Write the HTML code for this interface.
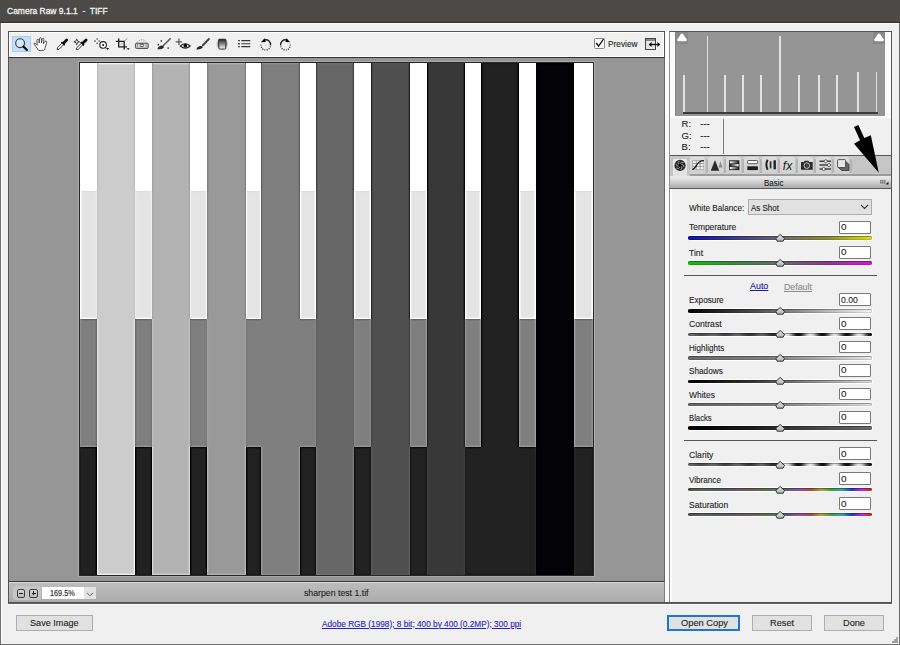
<!DOCTYPE html>
<html><head><meta charset="utf-8"><style>
*{margin:0;padding:0;box-sizing:border-box}
html,body{width:900px;height:645px;overflow:hidden;background:#f0f0f0;font-family:"Liberation Sans",sans-serif;color:#1e1e1e}
.a{position:absolute}
.t{position:absolute;white-space:pre;font-size:9px;line-height:10px;-webkit-text-stroke:0.12px currentColor}
svg{position:absolute;overflow:visible}
</style></head><body>
<div class="a" style="left:0;top:0;width:900px;height:23px;background:#4b4a47;border-bottom:1px solid #33312e"></div>
<div class="a" style="left:1px;top:23px;width:898px;height:1px;background:#fbfbfb"></div>
<div class="t" style="left:6.70px;top:5.00px;font-size:9.5px;line-height:12px;transform:scaleX(0.8929);transform-origin:0 0;color:#f4f4f4;-webkit-text-stroke:0.3px #f4f4f4">Camera Raw 9.1.1  -  TIFF</div>
<div class="a" style="left:0;top:23px;width:1px;height:622px;background:#707070"></div>
<div class="a" style="left:1px;top:24px;width:1px;height:620px;background:#fafafa"></div>
<div class="a" style="left:899px;top:23px;width:1px;height:622px;background:#707070"></div>
<div class="a" style="left:0;top:644px;width:900px;height:1px;background:#707070"></div>
<div class="a" style="left:8px;top:31px;width:657px;height:27px;background:#f0f0f0;border:1px solid #555;border-bottom:1px solid #333;box-shadow:inset 1px 1px 0 #fff,inset -1px -1px 0 #fff"></div>
<div class="a" style="left:8px;top:57px;width:657px;height:525px;background:#969696;border-left:1px solid #555;border-right:1px solid #666;border-top:1px solid #333"></div>
<div class="a" style="left:79px;top:62px;width:515px;height:514px;border:1px solid #262626;background:#fff;box-shadow:0 0 0 1px #acacac"></div><div class="a" style="left:80px;top:63px;width:17px;height:128px;background:#ffffff;box-shadow:inset 1px 0 0 #ffffff,inset -1px 0 0 #ffffff,inset 0 1px 0 #ffffff,inset 0 -1px 0 #ffffff,inset 2px 0 0 #ffffff,inset -2px 0 0 #ffffff,inset 0 2px 0 #ffffff,inset 0 -2px 0 #ffffff"></div><div class="a" style="left:97px;top:63px;width:38px;height:128px;background:#cccccc;box-shadow:inset 1px 0 0 #bfbfbf,inset -1px 0 0 #bfbfbf,inset 0 1px 0 #f0f0f0,inset 2px 0 0 #c8c8c8,inset -2px 0 0 #c8c8c8,inset 0 2px 0 #d8d8d8"></div><div class="a" style="left:135px;top:63px;width:17px;height:128px;background:#ffffff;box-shadow:inset 1px 0 0 #ffffff,inset -1px 0 0 #ffffff,inset 0 1px 0 #ffffff,inset 0 -1px 0 #ffffff,inset 2px 0 0 #ffffff,inset -2px 0 0 #ffffff,inset 0 2px 0 #ffffff,inset 0 -2px 0 #ffffff"></div><div class="a" style="left:152px;top:63px;width:38px;height:128px;background:#b3b3b3;box-shadow:inset 1px 0 0 #a0a0a0,inset -1px 0 0 #a0a0a0,inset 0 1px 0 #d1d1d1,inset 2px 0 0 #adadad,inset -2px 0 0 #adadad,inset 0 2px 0 #bdbdbd"></div><div class="a" style="left:190px;top:63px;width:17px;height:128px;background:#ffffff;box-shadow:inset 1px 0 0 #ffffff,inset -1px 0 0 #ffffff,inset 0 1px 0 #ffffff,inset 0 -1px 0 #ffffff,inset 2px 0 0 #ffffff,inset -2px 0 0 #ffffff,inset 0 2px 0 #ffffff,inset 0 -2px 0 #ffffff"></div><div class="a" style="left:207px;top:63px;width:39px;height:128px;background:#999999;box-shadow:inset 1px 0 0 #808080,inset -1px 0 0 #808080,inset 0 1px 0 #b0b0b0,inset 2px 0 0 #919191,inset -2px 0 0 #919191,inset 0 2px 0 #a0a0a0"></div><div class="a" style="left:246px;top:63px;width:15px;height:128px;background:#ffffff;box-shadow:inset 1px 0 0 #ffffff,inset -1px 0 0 #ffffff,inset 0 1px 0 #ffffff,inset 0 -1px 0 #ffffff,inset 2px 0 0 #ffffff,inset -2px 0 0 #ffffff,inset 0 2px 0 #ffffff,inset 0 -2px 0 #ffffff"></div><div class="a" style="left:261px;top:63px;width:39px;height:128px;background:#7f7f7f;box-shadow:inset 1px 0 0 #5f5f5f,inset -1px 0 0 #5f5f5f,inset 0 1px 0 #909090,inset 2px 0 0 #757575,inset -2px 0 0 #757575,inset 0 2px 0 #848484"></div><div class="a" style="left:300px;top:63px;width:16px;height:128px;background:#ffffff;box-shadow:inset 1px 0 0 #ffffff,inset -1px 0 0 #ffffff,inset 0 1px 0 #ffffff,inset 0 -1px 0 #ffffff,inset 2px 0 0 #ffffff,inset -2px 0 0 #ffffff,inset 0 2px 0 #ffffff,inset 0 -2px 0 #ffffff"></div><div class="a" style="left:316px;top:63px;width:38px;height:128px;background:#676767;box-shadow:inset 1px 0 0 #414141,inset -1px 0 0 #414141,inset 0 1px 0 #727272,inset 2px 0 0 #5b5b5b,inset -2px 0 0 #5b5b5b,inset 0 2px 0 #6a6a6a"></div><div class="a" style="left:354px;top:63px;width:17px;height:128px;background:#ffffff;box-shadow:inset 1px 0 0 #ffffff,inset -1px 0 0 #ffffff,inset 0 1px 0 #ffffff,inset 0 -1px 0 #ffffff,inset 2px 0 0 #ffffff,inset -2px 0 0 #ffffff,inset 0 2px 0 #ffffff,inset 0 -2px 0 #ffffff"></div><div class="a" style="left:371px;top:63px;width:39px;height:128px;background:#4f4f4f;box-shadow:inset 1px 0 0 #232323,inset -1px 0 0 #232323,inset 0 1px 0 #545454,inset 2px 0 0 #414141,inset -2px 0 0 #414141,inset 0 2px 0 #515151"></div><div class="a" style="left:410px;top:63px;width:17px;height:128px;background:#ffffff;box-shadow:inset 1px 0 0 #ffffff,inset -1px 0 0 #ffffff,inset 0 1px 0 #ffffff,inset 0 -1px 0 #ffffff,inset 2px 0 0 #ffffff,inset -2px 0 0 #ffffff,inset 0 2px 0 #ffffff,inset 0 -2px 0 #ffffff"></div><div class="a" style="left:427px;top:63px;width:38px;height:128px;background:#383838;box-shadow:inset 1px 0 0 #060606,inset -1px 0 0 #060606,inset 0 1px 0 #373737,inset 2px 0 0 #282828,inset -2px 0 0 #282828,inset 0 2px 0 #383838"></div><div class="a" style="left:465px;top:63px;width:16px;height:128px;background:#ffffff;box-shadow:inset 1px 0 0 #ffffff,inset -1px 0 0 #ffffff,inset 0 1px 0 #ffffff,inset 0 -1px 0 #ffffff,inset 2px 0 0 #ffffff,inset -2px 0 0 #ffffff,inset 0 2px 0 #ffffff,inset 0 -2px 0 #ffffff"></div><div class="a" style="left:481px;top:63px;width:38px;height:128px;background:#212121;box-shadow:inset 1px 0 0 #000000,inset -1px 0 0 #000000,inset 0 1px 0 #1a1a1a,inset 2px 0 0 #0f0f0f,inset -2px 0 0 #0f0f0f,inset 0 2px 0 #1f1f1f"></div><div class="a" style="left:519px;top:63px;width:17px;height:128px;background:#ffffff;box-shadow:inset 1px 0 0 #ffffff,inset -1px 0 0 #ffffff,inset 0 1px 0 #ffffff,inset 0 -1px 0 #ffffff,inset 2px 0 0 #ffffff,inset -2px 0 0 #ffffff,inset 0 2px 0 #ffffff,inset 0 -2px 0 #ffffff"></div><div class="a" style="left:536px;top:63px;width:38px;height:128px;background:#030307;box-shadow:inset 1px 0 0 #000000,inset -1px 0 0 #000000,inset 0 1px 0 #000000,inset 2px 0 0 #000000,inset -2px 0 0 #000000,inset 0 2px 0 #000000"></div><div class="a" style="left:574px;top:63px;width:19px;height:128px;background:#ffffff;box-shadow:inset 1px 0 0 #ffffff,inset -1px 0 0 #ffffff,inset 0 1px 0 #ffffff,inset 0 -1px 0 #ffffff,inset 2px 0 0 #ffffff,inset -2px 0 0 #ffffff,inset 0 2px 0 #ffffff,inset 0 -2px 0 #ffffff"></div><div class="a" style="left:80px;top:191px;width:17px;height:128px;background:#e4e4e4;box-shadow:inset 1px 0 0 #ffffff,inset -1px 0 0 #eaeaea,inset 0 1px 0 #dddddd,inset 0 -1px 0 #fdfdfd,inset 2px 0 0 #f1f1f1,inset -2px 0 0 #e6e6e6,inset 0 2px 0 #e2e2e2,inset 0 -2px 0 #ececec"></div><div class="a" style="left:97px;top:191px;width:38px;height:128px;background:#cccccc;box-shadow:inset 1px 0 0 #c6c6c6,inset -1px 0 0 #c6c6c6,inset 2px 0 0 #cacaca,inset -2px 0 0 #cacaca"></div><div class="a" style="left:135px;top:191px;width:17px;height:128px;background:#e4e4e4;box-shadow:inset 1px 0 0 #eaeaea,inset -1px 0 0 #f0f0f0,inset 0 1px 0 #dddddd,inset 0 -1px 0 #fdfdfd,inset 2px 0 0 #e6e6e6,inset -2px 0 0 #e8e8e8,inset 0 2px 0 #e2e2e2,inset 0 -2px 0 #ececec"></div><div class="a" style="left:152px;top:191px;width:38px;height:128px;background:#b3b3b3;box-shadow:inset 1px 0 0 #a7a7a7,inset -1px 0 0 #a7a7a7,inset 2px 0 0 #afafaf,inset -2px 0 0 #afafaf"></div><div class="a" style="left:190px;top:191px;width:17px;height:128px;background:#e4e4e4;box-shadow:inset 1px 0 0 #f0f0f0,inset -1px 0 0 #f7f7f7,inset 0 1px 0 #dddddd,inset 0 -1px 0 #fdfdfd,inset 2px 0 0 #e8e8e8,inset -2px 0 0 #eaeaea,inset 0 2px 0 #e2e2e2,inset 0 -2px 0 #ececec"></div><div class="a" style="left:207px;top:191px;width:39px;height:128px;background:#999999;box-shadow:inset 1px 0 0 #868686,inset -1px 0 0 #868686,inset 2px 0 0 #939393,inset -2px 0 0 #939393"></div><div class="a" style="left:246px;top:191px;width:15px;height:128px;background:#e4e4e4;box-shadow:inset 1px 0 0 #f7f7f7,inset -1px 0 0 #fdfdfd,inset 0 1px 0 #dddddd,inset 0 -1px 0 #fdfdfd,inset 2px 0 0 #eaeaea,inset -2px 0 0 #ececec,inset 0 2px 0 #e2e2e2,inset 0 -2px 0 #ececec"></div><div class="a" style="left:261px;top:191px;width:39px;height:128px;background:#7f7f7f;box-shadow:inset 1px 0 0 #666666,inset -1px 0 0 #666666,inset 2px 0 0 #777777,inset -2px 0 0 #777777"></div><div class="a" style="left:300px;top:191px;width:16px;height:128px;background:#e4e4e4;box-shadow:inset 1px 0 0 #fdfdfd,inset -1px 0 0 #ffffff,inset 0 1px 0 #dddddd,inset 0 -1px 0 #fdfdfd,inset 2px 0 0 #ececec,inset -2px 0 0 #eeeeee,inset 0 2px 0 #e2e2e2,inset 0 -2px 0 #ececec"></div><div class="a" style="left:316px;top:191px;width:38px;height:128px;background:#676767;box-shadow:inset 1px 0 0 #484848,inset -1px 0 0 #484848,inset 2px 0 0 #5d5d5d,inset -2px 0 0 #5d5d5d"></div><div class="a" style="left:354px;top:191px;width:17px;height:128px;background:#e4e4e4;box-shadow:inset 1px 0 0 #ffffff,inset -1px 0 0 #ffffff,inset 0 1px 0 #dddddd,inset 0 -1px 0 #fdfdfd,inset 2px 0 0 #eeeeee,inset -2px 0 0 #f0f0f0,inset 0 2px 0 #e2e2e2,inset 0 -2px 0 #ececec"></div><div class="a" style="left:371px;top:191px;width:39px;height:128px;background:#4f4f4f;box-shadow:inset 1px 0 0 #2a2a2a,inset -1px 0 0 #2a2a2a,inset 2px 0 0 #434343,inset -2px 0 0 #434343"></div><div class="a" style="left:410px;top:191px;width:17px;height:128px;background:#e4e4e4;box-shadow:inset 1px 0 0 #ffffff,inset -1px 0 0 #ffffff,inset 0 1px 0 #dddddd,inset 0 -1px 0 #fdfdfd,inset 2px 0 0 #f0f0f0,inset -2px 0 0 #f2f2f2,inset 0 2px 0 #e2e2e2,inset 0 -2px 0 #ececec"></div><div class="a" style="left:427px;top:191px;width:38px;height:128px;background:#383838;box-shadow:inset 1px 0 0 #0d0d0d,inset -1px 0 0 #0d0d0d,inset 2px 0 0 #2a2a2a,inset -2px 0 0 #2a2a2a"></div><div class="a" style="left:465px;top:191px;width:16px;height:128px;background:#e4e4e4;box-shadow:inset 1px 0 0 #ffffff,inset -1px 0 0 #ffffff,inset 0 1px 0 #dddddd,inset 0 -1px 0 #fdfdfd,inset 2px 0 0 #f2f2f2,inset -2px 0 0 #f4f4f4,inset 0 2px 0 #e2e2e2,inset 0 -2px 0 #ececec"></div><div class="a" style="left:481px;top:191px;width:38px;height:128px;background:#212121;box-shadow:inset 1px 0 0 #000000,inset -1px 0 0 #000000,inset 2px 0 0 #111111,inset -2px 0 0 #111111"></div><div class="a" style="left:519px;top:191px;width:17px;height:128px;background:#e4e4e4;box-shadow:inset 1px 0 0 #ffffff,inset -1px 0 0 #ffffff,inset 0 1px 0 #dddddd,inset 0 -1px 0 #fdfdfd,inset 2px 0 0 #f4f4f4,inset -2px 0 0 #f6f6f6,inset 0 2px 0 #e2e2e2,inset 0 -2px 0 #ececec"></div><div class="a" style="left:536px;top:191px;width:38px;height:128px;background:#030307;box-shadow:inset 1px 0 0 #000000,inset -1px 0 0 #000000,inset 2px 0 0 #000000,inset -2px 0 0 #000000"></div><div class="a" style="left:574px;top:191px;width:19px;height:128px;background:#e4e4e4;box-shadow:inset 1px 0 0 #ffffff,inset -1px 0 0 #ffffff,inset 0 1px 0 #dddddd,inset 0 -1px 0 #fdfdfd,inset 2px 0 0 #f6f6f6,inset -2px 0 0 #f1f1f1,inset 0 2px 0 #e2e2e2,inset 0 -2px 0 #ececec"></div><div class="a" style="left:80px;top:319px;width:17px;height:128px;background:#7f7f7f;box-shadow:inset 1px 0 0 #909090,inset -1px 0 0 #6c6c6c,inset 0 1px 0 #666666,inset 0 -1px 0 #969696,inset 2px 0 0 #848484,inset -2px 0 0 #797979,inset 0 2px 0 #777777,inset 0 -2px 0 #878787"></div><div class="a" style="left:97px;top:319px;width:38px;height:128px;background:#cccccc;box-shadow:inset 1px 0 0 #dfdfdf,inset -1px 0 0 #dfdfdf,inset 2px 0 0 #d2d2d2,inset -2px 0 0 #d2d2d2"></div><div class="a" style="left:135px;top:319px;width:17px;height:128px;background:#7f7f7f;box-shadow:inset 1px 0 0 #6c6c6c,inset -1px 0 0 #727272,inset 0 1px 0 #666666,inset 0 -1px 0 #969696,inset 2px 0 0 #797979,inset -2px 0 0 #7b7b7b,inset 0 2px 0 #777777,inset 0 -2px 0 #878787"></div><div class="a" style="left:152px;top:319px;width:38px;height:128px;background:#b3b3b3;box-shadow:inset 1px 0 0 #c0c0c0,inset -1px 0 0 #c0c0c0,inset 2px 0 0 #b7b7b7,inset -2px 0 0 #b7b7b7"></div><div class="a" style="left:190px;top:319px;width:17px;height:128px;background:#7f7f7f;box-shadow:inset 1px 0 0 #727272,inset -1px 0 0 #787878,inset 0 1px 0 #666666,inset 0 -1px 0 #969696,inset 2px 0 0 #7b7b7b,inset -2px 0 0 #7d7d7d,inset 0 2px 0 #777777,inset 0 -2px 0 #878787"></div><div class="a" style="left:207px;top:319px;width:39px;height:128px;background:#999999;box-shadow:inset 1px 0 0 #a0a0a0,inset -1px 0 0 #a0a0a0,inset 2px 0 0 #9b9b9b,inset -2px 0 0 #9b9b9b"></div><div class="a" style="left:246px;top:319px;width:15px;height:128px;background:#7f7f7f;box-shadow:inset 1px 0 0 #787878,inset 0 1px 0 #666666,inset 0 -1px 0 #969696,inset 2px 0 0 #7d7d7d,inset 0 2px 0 #777777,inset 0 -2px 0 #878787"></div><div class="a" style="left:261px;top:319px;width:39px;height:128px;background:#7f7f7f"></div><div class="a" style="left:300px;top:319px;width:16px;height:128px;background:#7f7f7f;box-shadow:inset -1px 0 0 #858585,inset 0 1px 0 #666666,inset 0 -1px 0 #969696,inset -2px 0 0 #818181,inset 0 2px 0 #777777,inset 0 -2px 0 #878787"></div><div class="a" style="left:316px;top:319px;width:38px;height:128px;background:#676767;box-shadow:inset 1px 0 0 #616161,inset -1px 0 0 #616161,inset 2px 0 0 #656565,inset -2px 0 0 #656565"></div><div class="a" style="left:354px;top:319px;width:17px;height:128px;background:#7f7f7f;box-shadow:inset 1px 0 0 #858585,inset -1px 0 0 #8b8b8b,inset 0 1px 0 #666666,inset 0 -1px 0 #969696,inset 2px 0 0 #818181,inset -2px 0 0 #838383,inset 0 2px 0 #777777,inset 0 -2px 0 #878787"></div><div class="a" style="left:371px;top:319px;width:39px;height:128px;background:#4f4f4f;box-shadow:inset 1px 0 0 #434343,inset -1px 0 0 #434343,inset 2px 0 0 #4b4b4b,inset -2px 0 0 #4b4b4b"></div><div class="a" style="left:410px;top:319px;width:17px;height:128px;background:#7f7f7f;box-shadow:inset 1px 0 0 #8b8b8b,inset -1px 0 0 #919191,inset 0 1px 0 #666666,inset 0 -1px 0 #969696,inset 2px 0 0 #838383,inset -2px 0 0 #858585,inset 0 2px 0 #777777,inset 0 -2px 0 #878787"></div><div class="a" style="left:427px;top:319px;width:38px;height:128px;background:#383838;box-shadow:inset 1px 0 0 #262626,inset -1px 0 0 #262626,inset 2px 0 0 #323232,inset -2px 0 0 #323232"></div><div class="a" style="left:465px;top:319px;width:16px;height:128px;background:#7f7f7f;box-shadow:inset 1px 0 0 #919191,inset -1px 0 0 #969696,inset 0 1px 0 #666666,inset 0 -1px 0 #969696,inset 2px 0 0 #858585,inset -2px 0 0 #878787,inset 0 2px 0 #777777,inset 0 -2px 0 #878787"></div><div class="a" style="left:481px;top:319px;width:38px;height:128px;background:#212121;box-shadow:inset 1px 0 0 #0a0a0a,inset -1px 0 0 #0a0a0a,inset 2px 0 0 #191919,inset -2px 0 0 #191919"></div><div class="a" style="left:519px;top:319px;width:17px;height:128px;background:#7f7f7f;box-shadow:inset 1px 0 0 #969696,inset -1px 0 0 #9e9e9e,inset 0 1px 0 #666666,inset 0 -1px 0 #969696,inset 2px 0 0 #878787,inset -2px 0 0 #898989,inset 0 2px 0 #777777,inset 0 -2px 0 #878787"></div><div class="a" style="left:536px;top:319px;width:38px;height:128px;background:#030307;box-shadow:inset 1px 0 0 #000000,inset -1px 0 0 #000000,inset 2px 0 0 #000000,inset -2px 0 0 #000000"></div><div class="a" style="left:574px;top:319px;width:19px;height:128px;background:#7f7f7f;box-shadow:inset 1px 0 0 #9e9e9e,inset -1px 0 0 #909090,inset 0 1px 0 #666666,inset 0 -1px 0 #969696,inset 2px 0 0 #898989,inset -2px 0 0 #848484,inset 0 2px 0 #777777,inset 0 -2px 0 #878787"></div><div class="a" style="left:80px;top:447px;width:17px;height:128px;background:#212121;box-shadow:inset 1px 0 0 #1a1a1a,inset -1px 0 0 #000000,inset 0 1px 0 #0a0a0a,inset 0 -1px 0 #1a1a1a,inset 2px 0 0 #1f1f1f,inset -2px 0 0 #131313,inset 0 2px 0 #191919,inset 0 -2px 0 #1f1f1f"></div><div class="a" style="left:97px;top:447px;width:38px;height:128px;background:#cccccc;box-shadow:inset 1px 0 0 #f7f7f7,inset -1px 0 0 #f7f7f7,inset 0 -1px 0 #f0f0f0,inset 2px 0 0 #dadada,inset -2px 0 0 #dadada,inset 0 -2px 0 #d8d8d8"></div><div class="a" style="left:135px;top:447px;width:17px;height:128px;background:#212121;box-shadow:inset 1px 0 0 #000000,inset -1px 0 0 #000000,inset 0 1px 0 #0a0a0a,inset 0 -1px 0 #1a1a1a,inset 2px 0 0 #131313,inset -2px 0 0 #151515,inset 0 2px 0 #191919,inset 0 -2px 0 #1f1f1f"></div><div class="a" style="left:152px;top:447px;width:38px;height:128px;background:#b3b3b3;box-shadow:inset 1px 0 0 #d8d8d8,inset -1px 0 0 #d8d8d8,inset 0 -1px 0 #d1d1d1,inset 2px 0 0 #bfbfbf,inset -2px 0 0 #bfbfbf,inset 0 -2px 0 #bdbdbd"></div><div class="a" style="left:190px;top:447px;width:17px;height:128px;background:#212121;box-shadow:inset 1px 0 0 #000000,inset -1px 0 0 #030303,inset 0 1px 0 #0a0a0a,inset 0 -1px 0 #1a1a1a,inset 2px 0 0 #151515,inset -2px 0 0 #171717,inset 0 2px 0 #191919,inset 0 -2px 0 #1f1f1f"></div><div class="a" style="left:207px;top:447px;width:39px;height:128px;background:#999999;box-shadow:inset 1px 0 0 #b7b7b7,inset -1px 0 0 #b7b7b7,inset 0 -1px 0 #b0b0b0,inset 2px 0 0 #a3a3a3,inset -2px 0 0 #a3a3a3,inset 0 -2px 0 #a0a0a0"></div><div class="a" style="left:246px;top:447px;width:15px;height:128px;background:#212121;box-shadow:inset 1px 0 0 #030303,inset -1px 0 0 #0a0a0a,inset 0 1px 0 #0a0a0a,inset 0 -1px 0 #1a1a1a,inset 2px 0 0 #171717,inset -2px 0 0 #191919,inset 0 2px 0 #191919,inset 0 -2px 0 #1f1f1f"></div><div class="a" style="left:261px;top:447px;width:39px;height:128px;background:#7f7f7f;box-shadow:inset 1px 0 0 #969696,inset -1px 0 0 #969696,inset 0 -1px 0 #909090,inset 2px 0 0 #878787,inset -2px 0 0 #878787,inset 0 -2px 0 #848484"></div><div class="a" style="left:300px;top:447px;width:16px;height:128px;background:#212121;box-shadow:inset 1px 0 0 #0a0a0a,inset -1px 0 0 #101010,inset 0 1px 0 #0a0a0a,inset 0 -1px 0 #1a1a1a,inset 2px 0 0 #191919,inset -2px 0 0 #1b1b1b,inset 0 2px 0 #191919,inset 0 -2px 0 #1f1f1f"></div><div class="a" style="left:316px;top:447px;width:38px;height:128px;background:#676767;box-shadow:inset 1px 0 0 #787878,inset -1px 0 0 #787878,inset 0 -1px 0 #727272,inset 2px 0 0 #6d6d6d,inset -2px 0 0 #6d6d6d,inset 0 -2px 0 #6a6a6a"></div><div class="a" style="left:354px;top:447px;width:17px;height:128px;background:#212121;box-shadow:inset 1px 0 0 #101010,inset -1px 0 0 #161616,inset 0 1px 0 #0a0a0a,inset 0 -1px 0 #1a1a1a,inset 2px 0 0 #1b1b1b,inset -2px 0 0 #1d1d1d,inset 0 2px 0 #191919,inset 0 -2px 0 #1f1f1f"></div><div class="a" style="left:371px;top:447px;width:39px;height:128px;background:#4f4f4f;box-shadow:inset 1px 0 0 #5a5a5a,inset -1px 0 0 #5a5a5a,inset 0 -1px 0 #545454,inset 2px 0 0 #535353,inset -2px 0 0 #535353,inset 0 -2px 0 #515151"></div><div class="a" style="left:410px;top:447px;width:17px;height:128px;background:#212121;box-shadow:inset 1px 0 0 #161616,inset -1px 0 0 #1b1b1b,inset 0 1px 0 #0a0a0a,inset 0 -1px 0 #1a1a1a,inset 2px 0 0 #1d1d1d,inset -2px 0 0 #1f1f1f,inset 0 2px 0 #191919,inset 0 -2px 0 #1f1f1f"></div><div class="a" style="left:427px;top:447px;width:38px;height:128px;background:#383838;box-shadow:inset 1px 0 0 #3e3e3e,inset -1px 0 0 #3e3e3e,inset 0 -1px 0 #373737,inset 2px 0 0 #3a3a3a,inset -2px 0 0 #3a3a3a,inset 0 -2px 0 #383838"></div><div class="a" style="left:465px;top:447px;width:16px;height:128px;background:#212121;box-shadow:inset 1px 0 0 #1b1b1b,inset 0 1px 0 #0a0a0a,inset 0 -1px 0 #1a1a1a,inset 2px 0 0 #1f1f1f,inset 0 2px 0 #191919,inset 0 -2px 0 #1f1f1f"></div><div class="a" style="left:481px;top:447px;width:38px;height:128px;background:#212121;box-shadow:inset 0 -1px 0 #1a1a1a,inset 0 -2px 0 #1f1f1f"></div><div class="a" style="left:519px;top:447px;width:17px;height:128px;background:#212121;box-shadow:inset -1px 0 0 #282828,inset 0 1px 0 #0a0a0a,inset 0 -1px 0 #1a1a1a,inset -2px 0 0 #232323,inset 0 2px 0 #191919,inset 0 -2px 0 #1f1f1f"></div><div class="a" style="left:536px;top:447px;width:38px;height:128px;background:#030307;box-shadow:inset 1px 0 0 #000000,inset -1px 0 0 #000000,inset 0 -1px 0 #000000,inset 2px 0 0 #010101,inset -2px 0 0 #010101,inset 0 -2px 0 #000000"></div><div class="a" style="left:574px;top:447px;width:19px;height:128px;background:#212121;box-shadow:inset 1px 0 0 #282828,inset -1px 0 0 #1a1a1a,inset 0 1px 0 #0a0a0a,inset 0 -1px 0 #1a1a1a,inset 2px 0 0 #232323,inset -2px 0 0 #1f1f1f,inset 0 2px 0 #191919,inset 0 -2px 0 #1f1f1f"></div>
<div class="a" style="left:8px;top:581px;width:657px;height:22px;background:linear-gradient(#bdbdbd,#acacac);border-left:1px solid #555;border-right:1px solid #7a7a7a;border-top:1px solid #3a3a3a;box-shadow:inset 0 1px 0 #d8d8d8,inset 0 -1px 0 #c8c8c8"></div>
<div class="a" style="left:665px;top:31px;width:4px;height:572px;background:#fbfbfb"></div>
<div class="a" style="left:669px;top:31px;width:223px;height:572px;background:#f0f0f0;border:1px solid #555;border-left:1px solid #8e8e8e;border-bottom:none;box-shadow:inset 2px 0 0 #fbfbfb,inset 0 -1px 0 #fbfbfb"></div>
<div class="a" style="left:8px;top:602px;width:884px;height:2px;background:linear-gradient(#4a4a4a,#6a6a6a)"></div>
<div class="a" style="left:8px;top:604px;width:884px;height:1px;background:#fbfbfb"></div>
<div class="a" style="left:670px;top:32px;width:221px;height:86px;background:#fbfbfb"></div>
<div class="a" style="left:670px;top:118px;width:221px;height:37px;background:#f0f0f0;box-shadow:inset 1px 0 0 #fbfbfb"></div>
<div class="a" style="left:675px;top:32px;width:210px;height:84px;background:#959595;border-left:1px solid #858585"></div>
<div class="a" style="left:683.25px;top:75px;width:1.6px;height:37px;background:#e2e2e2"></div>
<div class="a" style="left:706.75px;top:36px;width:1.6px;height:76px;background:#e2e2e2"></div>
<div class="a" style="left:724.25px;top:75px;width:1.6px;height:37px;background:#e2e2e2"></div>
<div class="a" style="left:742.25px;top:75px;width:1.6px;height:37px;background:#e2e2e2"></div>
<div class="a" style="left:760.25px;top:75px;width:1.6px;height:37px;background:#e2e2e2"></div>
<div class="a" style="left:779.25px;top:36px;width:1.6px;height:76px;background:#e2e2e2"></div>
<div class="a" style="left:798.25px;top:75px;width:1.6px;height:37px;background:#e2e2e2"></div>
<div class="a" style="left:818.25px;top:75px;width:1.6px;height:37px;background:#e2e2e2"></div>
<div class="a" style="left:836.25px;top:75px;width:1.6px;height:37px;background:#e2e2e2"></div>
<div class="a" style="left:857.25px;top:72px;width:1.6px;height:40px;background:#e2e2e2"></div>
<div class="a" style="left:875.75px;top:72px;width:1.6px;height:40px;background:#e2e2e2"></div>
<div class="a" style="left:683px;top:112px;width:195px;height:2px;background:#3c3c3c"></div>
<div class="a" style="left:676px;top:32px;width:12px;height:12px;background:#888"></div>
<svg style="left:676px;top:32px" width="12" height="12"><path d="M2.4 9.3 Q0.6 9.3 1.4 7.2 L4.8 2.2 Q6 0.6 7.2 2.2 L10.6 7.2 Q11.4 9.3 9.6 9.3 Z" fill="#fff"/></svg>
<div class="a" style="left:873px;top:32px;width:12px;height:12px;background:#888"></div>
<svg style="left:873px;top:32px" width="12" height="12"><path d="M2.4 9.3 Q0.6 9.3 1.4 7.2 L4.8 2.2 Q6 0.6 7.2 2.2 L10.6 7.2 Q11.4 9.3 9.6 9.3 Z" fill="#fff"/></svg>
<div class="t" style="left:681.60px;top:118.20px;font-size:9.5px;line-height:12px;color:#222;">R:</div>
<div class="t" style="left:700.30px;top:118.20px;font-size:9.5px;line-height:12px;color:#222;">---</div>
<div class="t" style="left:681.60px;top:130.00px;font-size:9.5px;line-height:12px;color:#222;">G:</div>
<div class="t" style="left:700.30px;top:130.00px;font-size:9.5px;line-height:12px;color:#222;">---</div>
<div class="t" style="left:681.60px;top:141.20px;font-size:9.5px;line-height:12px;color:#222;">B:</div>
<div class="t" style="left:700.30px;top:141.20px;font-size:9.5px;line-height:12px;color:#222;">---</div>
<div class="a" style="left:723px;top:119px;width:1px;height:35px;background:#7a7a7a"></div>
<div class="a" style="left:670px;top:155px;width:221px;height:1px;background:#555"></div>
<div class="a" style="left:670px;top:156px;width:221px;height:20px;background:#c6c6c6"></div>
<div class="a" style="left:690px;top:173.8px;width:201px;height:1.8px;background:#9c9c9c"></div>
<div class="a" style="left:672px;top:157.5px;width:15.6px;height:18.5px;background:linear-gradient(#ececec,#e2e2e2);border:1px solid #c4c4c4;border-bottom:none;border-radius:2px 2px 0 0"></div>
<div class="a" style="left:690px;top:157.3px;width:15.4px;height:16.5px;background:linear-gradient(#dedede,#d0d0d0);border-radius:1.5px"></div>
<div class="a" style="left:705.6px;top:157.5px;width:2.6px;height:16.3px;background:#b4b4b4;border-top:1px solid #dadada;border-bottom:1px solid #d8d8d8"></div>
<div class="a" style="left:708px;top:157.3px;width:15.4px;height:16.5px;background:linear-gradient(#dedede,#d0d0d0);border-radius:1.5px"></div>
<div class="a" style="left:723.6px;top:157.5px;width:2.6px;height:16.3px;background:#b4b4b4;border-top:1px solid #dadada;border-bottom:1px solid #d8d8d8"></div>
<div class="a" style="left:726px;top:157.3px;width:15.4px;height:16.5px;background:linear-gradient(#dedede,#d0d0d0);border-radius:1.5px"></div>
<div class="a" style="left:741.6px;top:157.5px;width:2.6px;height:16.3px;background:#b4b4b4;border-top:1px solid #dadada;border-bottom:1px solid #d8d8d8"></div>
<div class="a" style="left:744px;top:157.3px;width:15.4px;height:16.5px;background:linear-gradient(#dedede,#d0d0d0);border-radius:1.5px"></div>
<div class="a" style="left:759.6px;top:157.5px;width:2.6px;height:16.3px;background:#b4b4b4;border-top:1px solid #dadada;border-bottom:1px solid #d8d8d8"></div>
<div class="a" style="left:762px;top:157.3px;width:15.4px;height:16.5px;background:linear-gradient(#dedede,#d0d0d0);border-radius:1.5px"></div>
<div class="a" style="left:777.6px;top:157.5px;width:2.6px;height:16.3px;background:#b4b4b4;border-top:1px solid #dadada;border-bottom:1px solid #d8d8d8"></div>
<div class="a" style="left:780px;top:157.3px;width:15.4px;height:16.5px;background:linear-gradient(#dedede,#d0d0d0);border-radius:1.5px"></div>
<div class="a" style="left:795.6px;top:157.5px;width:2.6px;height:16.3px;background:#b4b4b4;border-top:1px solid #dadada;border-bottom:1px solid #d8d8d8"></div>
<div class="a" style="left:798px;top:157.3px;width:15.4px;height:16.5px;background:linear-gradient(#dedede,#d0d0d0);border-radius:1.5px"></div>
<div class="a" style="left:813.6px;top:157.5px;width:2.6px;height:16.3px;background:#b4b4b4;border-top:1px solid #dadada;border-bottom:1px solid #d8d8d8"></div>
<div class="a" style="left:816px;top:157.3px;width:15.4px;height:16.5px;background:linear-gradient(#dedede,#d0d0d0);border-radius:1.5px"></div>
<div class="a" style="left:831.6px;top:157.5px;width:2.6px;height:16.3px;background:#b4b4b4;border-top:1px solid #dadada;border-bottom:1px solid #d8d8d8"></div>
<div class="a" style="left:834px;top:157.3px;width:15.4px;height:16.5px;background:linear-gradient(#dedede,#d0d0d0);border-radius:1.5px"></div>
<div class="a" style="left:849.6px;top:157.5px;width:2.6px;height:16.3px;background:#b4b4b4;border-top:1px solid #dadada;border-bottom:1px solid #d8d8d8"></div>
<svg style="left:0;top:0" width="900" height="645"><circle cx="680" cy="165.4" r="5.6" fill="#2a2a2a"/><path d="M680.00 163.80 Q680.57 161.64 683.60 162.54" stroke="#9a9a9a" stroke-width="0.9" fill="none"/><path d="M681.39 164.60 Q683.54 164.01 684.28 167.09" stroke="#9a9a9a" stroke-width="0.9" fill="none"/><path d="M681.39 166.20 Q682.97 167.77 680.67 169.95" stroke="#9a9a9a" stroke-width="0.9" fill="none"/><path d="M680.00 167.00 Q679.43 169.16 676.40 168.26" stroke="#9a9a9a" stroke-width="0.9" fill="none"/><path d="M678.61 166.20 Q676.46 166.79 675.72 163.71" stroke="#9a9a9a" stroke-width="0.9" fill="none"/><path d="M678.61 164.60 Q677.03 163.03 679.33 160.85" stroke="#9a9a9a" stroke-width="0.9" fill="none"/><circle cx="680" cy="165.4" r="1.3" fill="#000"/><rect x="692.2" y="160.2" width="11.8" height="9.6" fill="#9a9a9a"/><g fill="#f4f4f4"><rect x="692.80" y="160.80" width="2.9" height="2.2"/><rect x="692.80" y="163.90" width="2.9" height="2.2"/><rect x="692.80" y="167.00" width="2.9" height="2.2"/><rect x="696.70" y="160.80" width="2.9" height="2.2"/><rect x="696.70" y="163.90" width="2.9" height="2.2"/><rect x="696.70" y="167.00" width="2.9" height="2.2"/><rect x="700.60" y="160.80" width="2.9" height="2.2"/><rect x="700.60" y="163.90" width="2.9" height="2.2"/><rect x="700.60" y="167.00" width="2.9" height="2.2"/></g><path d="M692.4 169.5 Q695 168.8 697 164.5 Q699 160.8 703.9 160.6" stroke="#111" stroke-width="1.2" fill="none"/><path d="M720.3 161 L722.5 167.5 L718.8 167.5 Z" fill="#888"/><path d="M715 160 L719.2 170.8 L710.8 170.8 Z" fill="#2a2a2a"/><rect x="729" y="160.3" width="10.4" height="9.8" fill="#222"/><defs><linearGradient id="hs" x1="0" x2="1"><stop offset="0" stop-color="#fff"/><stop offset="1" stop-color="#222"/></linearGradient><linearGradient id="hs2" x1="1" x2="0"><stop offset="0" stop-color="#fff"/><stop offset="1" stop-color="#222"/></linearGradient></defs><rect x="729.8" y="161.2" width="8.8" height="2.2" fill="url(#hs)"/><rect x="729.8" y="164.1" width="8.8" height="2.2" fill="url(#hs2)"/><rect x="729.8" y="167" width="8.8" height="2.2" fill="url(#hs)"/><rect x="747.6" y="160.5" width="10" height="3.2" rx="0.8" fill="#fafafa" stroke="#333" stroke-width="0.8"/><rect x="747.3" y="166.3" width="10.6" height="3.8" fill="#1e1e1e"/><path d="M767.6 159.8 Q765.2 164.8 767.6 169.8" stroke="#222" stroke-width="2" fill="none"/><rect x="769.7" y="161.3" width="1.8" height="7" fill="#333"/><rect x="773.5" y="160.3" width="2.4" height="9" fill="#222"/><text x="782.8" y="170.2" font-family="Liberation Sans" font-style="italic" font-size="12" fill="#1a1a1a">fx</text><path d="M801 162 H803.8 L804.6 160.8 H808.4 L809.2 162 H812.7 V169.7 H801 Z" fill="#2a2a2a"/><circle cx="806.8" cy="165.6" r="2.8" fill="none" stroke="#ddd" stroke-width="0.9"/><circle cx="806.8" cy="165.6" r="1.1" fill="#555"/><path d="M819.5 161.3 H831 M819.5 165.1 H831 M819.5 169 H831" stroke="#444" stroke-width="1.5"/><circle cx="825.7" cy="161.3" r="1.5" fill="#fff" stroke="#333" stroke-width="0.7"/><circle cx="829" cy="165.1" r="1.5" fill="#fff" stroke="#333" stroke-width="0.7"/><circle cx="823.7" cy="169" r="1.5" fill="#fff" stroke="#333" stroke-width="0.7"/><path d="M839 161.5 H846 L849 164.5 V170.5 H841.5 L838.5 167.5 Z" fill="#666" stroke="#333" stroke-width="0.8"/><rect x="837.6" y="159.6" width="8" height="8" rx="0.8" fill="#e6e6e6" stroke="#333" stroke-width="0.8"/></svg>
<div class="a" style="left:670px;top:175.5px;width:221px;height:13.5px;background:linear-gradient(#ededed,#e0e0e0 25%,#adadad);border-bottom:1.2px solid #5a5a5a"></div>
<div class="t" style="left:764.00px;top:177.00px;font-size:9.5px;line-height:12px;transform:scaleX(0.8409);transform-origin:0 0;color:#222;">Basic</div>
<svg style="left:879.5px;top:180px" width="6" height="4"><g fill="#7a7a7a"><rect x="0" y="0" width="1.6" height="1.6"/><rect x="2" y="0" width="1.6" height="1.6"/><rect x="4" y="0" width="1.6" height="1.6"/><rect x="0" y="2" width="1.6" height="1.6"/><rect x="2" y="2" width="1.6" height="1.6"/><rect x="4" y="2" width="1.6" height="1.6"/></g></svg>
<svg style="left:885px;top:181px" width="4" height="4"><path d="M3.5 0.5 L3.5 3.5 L0.5 3.5Z" fill="#222"/></svg>
<div class="t" style="left:689.30px;top:201.80px;font-size:9.5px;line-height:12px;transform:scaleX(0.8645);transform-origin:0 0;color:#1e1e1e;">White Balance:</div>
<div class="a" style="left:748px;top:199px;width:124px;height:16px;background:#e1e1e1;border:1px solid #adadad"></div>
<div class="t" style="left:750.70px;top:202.30px;font-size:9.5px;line-height:12px;transform:scaleX(0.8394);transform-origin:0 0;color:#1e1e1e;">As Shot</div>
<svg style="left:860px;top:204px" width="9" height="6"><path d="M1 1 L4.5 4.5 L8 1" stroke="#333" stroke-width="1.1" fill="none"/></svg>
<div class="t" style="left:689.30px;top:221.30px;font-size:9.5px;line-height:12px;transform:scaleX(0.8865);transform-origin:0 0;color:#1e1e1e;">Temperature</div>
<div class="a" style="left:838.5px;top:221px;width:32.5px;height:12.8px;background:#fff;border:1px solid #787878;border-radius:1px"></div>
<div class="t" style="left:840.60px;top:221.30px;font-size:9.5px;line-height:12px;transform:scaleX(1.0500);transform-origin:0 0;color:#1e1e1e;">0</div>
<div class="a" style="left:687.6px;top:235.2px;width:185px;height:5.6px;border-radius:2.8px;background:rgba(255,255,255,.85)"></div>
<div class="a" style="left:688px;top:236.2px;width:184px;height:3.6px;border-radius:1.8px;background:linear-gradient(90deg,#1010b0,#3a3a8a 25%,#6a6a6a 50%,#8a8a3a 75%,#e0e010);box-shadow:inset 0 0.8px 0 rgba(0,0,0,.45),inset 0 -0.6px 0 rgba(0,0,0,.25)"></div>
<svg style="left:775px;top:234.0px" width="11" height="9"><defs><linearGradient id="tg" x1="0" y1="0" x2="0" y2="1"><stop offset="0" stop-color="#e4e4e4"/><stop offset="1" stop-color="#b4b4b4"/></linearGradient></defs><path d="M5.1 0.5 L9.5 4.4 L8.1 7.2 L2.2 7.2 L0.8 4.4 Z" fill="url(#tg)" stroke="#333" stroke-width="1" stroke-linejoin="round"/></svg>
<div class="t" style="left:689.30px;top:247.00px;font-size:9.5px;line-height:12px;transform:scaleX(0.9067);transform-origin:0 0;color:#1e1e1e;">Tint</div>
<div class="a" style="left:838.5px;top:246px;width:32.5px;height:12.8px;background:#fff;border:1px solid #787878;border-radius:1px"></div>
<div class="t" style="left:840.60px;top:246.00px;font-size:9.5px;line-height:12px;transform:scaleX(1.0500);transform-origin:0 0;color:#1e1e1e;">0</div>
<div class="a" style="left:687.6px;top:260.1px;width:185px;height:5.6px;border-radius:2.8px;background:rgba(255,255,255,.85)"></div>
<div class="a" style="left:688px;top:261.1px;width:184px;height:3.6px;border-radius:1.8px;background:linear-gradient(90deg,#10c010,#3a8a3a 25%,#6a6a6a 50%,#8a3a8a 75%,#e010e0);box-shadow:inset 0 0.8px 0 rgba(0,0,0,.45),inset 0 -0.6px 0 rgba(0,0,0,.25)"></div>
<svg style="left:775px;top:258.90000000000003px" width="11" height="9"><defs><linearGradient id="tg" x1="0" y1="0" x2="0" y2="1"><stop offset="0" stop-color="#e4e4e4"/><stop offset="1" stop-color="#b4b4b4"/></linearGradient></defs><path d="M5.1 0.5 L9.5 4.4 L8.1 7.2 L2.2 7.2 L0.8 4.4 Z" fill="url(#tg)" stroke="#333" stroke-width="1" stroke-linejoin="round"/></svg>
<div class="a" style="left:684px;top:275px;width:193px;height:1px;background:#555"></div>
<div class="t" style="left:750.00px;top:279.60px;font-size:9.5px;line-height:12px;transform:scaleX(0.9368);transform-origin:0 0;color:#1a1aa0;text-decoration:underline">Auto</div>
<div class="t" style="left:783.80px;top:280.60px;font-size:9.5px;line-height:12px;transform:scaleX(0.9276);transform-origin:0 0;color:#8a8a8a;text-decoration:underline">Default</div>
<div class="t" style="left:689.30px;top:294.30px;font-size:9.5px;line-height:12px;transform:scaleX(0.8641);transform-origin:0 0;color:#1e1e1e;">Exposure</div>
<div class="a" style="left:838.5px;top:293.2px;width:32.5px;height:12.8px;background:#fff;border:1px solid #787878;border-radius:1px"></div>
<div class="t" style="left:840.60px;top:294.30px;font-size:9.5px;line-height:12px;transform:scaleX(0.9111);transform-origin:0 0;color:#1e1e1e;">0.00</div>
<div class="a" style="left:687.6px;top:308.2px;width:185px;height:5.6px;border-radius:2.8px;background:rgba(255,255,255,.85)"></div>
<div class="a" style="left:688px;top:309.2px;width:184px;height:3.6px;border-radius:1.8px;background:linear-gradient(90deg,#000,#555 40%,#aaa 70%,#f4f4f4);box-shadow:inset 0 0.8px 0 rgba(0,0,0,.45),inset 0 -0.6px 0 rgba(0,0,0,.25)"></div>
<svg style="left:775px;top:307.0px" width="11" height="9"><defs><linearGradient id="tg" x1="0" y1="0" x2="0" y2="1"><stop offset="0" stop-color="#e4e4e4"/><stop offset="1" stop-color="#b4b4b4"/></linearGradient></defs><path d="M5.1 0.5 L9.5 4.4 L8.1 7.2 L2.2 7.2 L0.8 4.4 Z" fill="url(#tg)" stroke="#333" stroke-width="1" stroke-linejoin="round"/></svg>
<div class="t" style="left:689.30px;top:318.00px;font-size:9.5px;line-height:12px;transform:scaleX(0.9086);transform-origin:0 0;color:#1e1e1e;">Contrast</div>
<div class="a" style="left:838.5px;top:316.8px;width:32.5px;height:12.8px;background:#fff;border:1px solid #787878;border-radius:1px"></div>
<div class="t" style="left:840.60px;top:318.00px;font-size:9.5px;line-height:12px;transform:scaleX(1.0500);transform-origin:0 0;color:#1e1e1e;">0</div>
<div class="a" style="left:687.6px;top:331.5px;width:185px;height:5.6px;border-radius:2.8px;background:rgba(255,255,255,.85)"></div>
<div class="a" style="left:688px;top:332.5px;width:92.5px;height:3.6px;border-radius:1.8px 0 0 1.8px;background:linear-gradient(90deg,rgb(103,103,103) 0px,rgb(103,103,103) 2px,rgb(100,100,100) 4px,rgb(94,94,94) 6px,rgb(88,88,88) 8px,rgb(83,83,83) 10px,rgb(80,80,80) 12px,rgb(79,79,79) 14px,rgb(82,82,82) 16px,rgb(87,87,87) 18px,rgb(93,93,93) 20px,rgb(99,99,99) 22px,rgb(102,102,102) 24px,rgb(102,102,102) 26px,rgb(97,97,97) 28px,rgb(90,90,90) 30px,rgb(81,81,81) 32px,rgb(73,73,73) 34px,rgb(68,68,68) 36px,rgb(67,67,67) 38px,rgb(71,71,71) 40px,rgb(78,78,78) 42px,rgb(87,87,87) 44px,rgb(96,96,96) 46px,rgb(101,101,101) 48px,rgb(101,101,101) 50px,rgb(96,96,96) 52px,rgb(86,86,86) 54px,rgb(75,75,75) 56px,rgb(64,64,64) 58px,rgb(57,57,57) 60px,rgb(55,55,55) 62px,rgb(59,59,59) 64px,rgb(68,68,68) 66px,rgb(80,80,80) 68px,rgb(91,91,91) 70px,rgb(99,99,99) 72px,rgb(100,100,100) 74px,rgb(94,94,94) 76px,rgb(83,83,83) 78px,rgb(69,69,69) 80px,rgb(55,55,55) 82px,rgb(46,46,46) 84px,rgb(43,43,43) 86px,rgb(47,47,47) 88px,rgb(58,58,58) 90px,rgb(72,72,72) 92px);box-shadow:inset 0 0.8px 0 rgba(0,0,0,.45)"></div>
<div class="a" style="left:780.5px;top:332.5px;width:91.5px;height:3.6px;border-radius:0 1.8px 1.8px 0;background:linear-gradient(90deg,rgb(146,146,146) 0px,rgb(195,195,195) 2px,rgb(224,224,224) 4px,rgb(227,227,227) 6px,rgb(203,203,203) 8px,rgb(157,157,157) 10px,rgb(102,102,102) 12px,rgb(52,52,52) 14px,rgb(21,21,21) 16px,rgb(16,16,16) 18px,rgb(39,39,39) 20px,rgb(83,83,83) 22px,rgb(138,138,138) 24px,rgb(188,188,188) 26px,rgb(222,222,222) 28px,rgb(229,229,229) 30px,rgb(208,208,208) 32px,rgb(165,165,165) 34px,rgb(110,110,110) 36px,rgb(59,59,59) 38px,rgb(24,24,24) 40px,rgb(15,15,15) 42px,rgb(34,34,34) 44px,rgb(76,76,76) 46px,rgb(130,130,130) 48px,rgb(182,182,182) 50px,rgb(218,218,218) 52px,rgb(229,229,229) 54px,rgb(213,213,213) 56px,rgb(172,172,172) 58px,rgb(119,119,119) 60px,rgb(66,66,66) 62px,rgb(28,28,28) 64px,rgb(15,15,15) 66px,rgb(29,29,29) 68px,rgb(68,68,68) 70px,rgb(121,121,121) 72px,rgb(175,175,175) 74px,rgb(214,214,214) 76px,rgb(229,229,229) 78px,rgb(217,217,217) 80px,rgb(179,179,179) 82px,rgb(127,127,127) 84px,rgb(73,73,73) 86px,rgb(32,32,32) 88px,rgb(15,15,15) 90px);box-shadow:inset 0 0.8px 0 rgba(0,0,0,.45)"></div>
<svg style="left:775px;top:330.3px" width="11" height="9"><defs><linearGradient id="tg" x1="0" y1="0" x2="0" y2="1"><stop offset="0" stop-color="#e4e4e4"/><stop offset="1" stop-color="#b4b4b4"/></linearGradient></defs><path d="M5.1 0.5 L9.5 4.4 L8.1 7.2 L2.2 7.2 L0.8 4.4 Z" fill="url(#tg)" stroke="#333" stroke-width="1" stroke-linejoin="round"/></svg>
<div class="t" style="left:689.30px;top:341.80px;font-size:9.5px;line-height:12px;transform:scaleX(0.8439);transform-origin:0 0;color:#1e1e1e;">Highlights</div>
<div class="a" style="left:838.5px;top:340.6px;width:32.5px;height:12.8px;background:#fff;border:1px solid #787878;border-radius:1px"></div>
<div class="t" style="left:840.60px;top:340.80px;font-size:9.5px;line-height:12px;transform:scaleX(1.0500);transform-origin:0 0;color:#1e1e1e;">0</div>
<div class="a" style="left:687.6px;top:355.1px;width:185px;height:5.6px;border-radius:2.8px;background:rgba(255,255,255,.85)"></div>
<div class="a" style="left:688px;top:356.1px;width:184px;height:3.6px;border-radius:1.8px;background:linear-gradient(90deg,#6a6a6a,#858585 50%,#c8c8c8 85%,#e6e6e6);box-shadow:inset 0 0.8px 0 rgba(0,0,0,.45),inset 0 -0.6px 0 rgba(0,0,0,.25)"></div>
<svg style="left:775px;top:353.90000000000003px" width="11" height="9"><defs><linearGradient id="tg" x1="0" y1="0" x2="0" y2="1"><stop offset="0" stop-color="#e4e4e4"/><stop offset="1" stop-color="#b4b4b4"/></linearGradient></defs><path d="M5.1 0.5 L9.5 4.4 L8.1 7.2 L2.2 7.2 L0.8 4.4 Z" fill="url(#tg)" stroke="#333" stroke-width="1" stroke-linejoin="round"/></svg>
<div class="t" style="left:689.30px;top:365.00px;font-size:9.5px;line-height:12px;transform:scaleX(0.8632);transform-origin:0 0;color:#1e1e1e;">Shadows</div>
<div class="a" style="left:838.5px;top:363.9px;width:32.5px;height:12.8px;background:#fff;border:1px solid #787878;border-radius:1px"></div>
<div class="t" style="left:840.60px;top:364.00px;font-size:9.5px;line-height:12px;transform:scaleX(1.0500);transform-origin:0 0;color:#1e1e1e;">0</div>
<div class="a" style="left:687.6px;top:378.5px;width:185px;height:5.6px;border-radius:2.8px;background:rgba(255,255,255,.85)"></div>
<div class="a" style="left:688px;top:379.5px;width:184px;height:3.6px;border-radius:1.8px;background:linear-gradient(90deg,#000,#3a3a3a 35%,#8a8a8a 65%,#e0e0e0);box-shadow:inset 0 0.8px 0 rgba(0,0,0,.45),inset 0 -0.6px 0 rgba(0,0,0,.25)"></div>
<svg style="left:775px;top:377.3px" width="11" height="9"><defs><linearGradient id="tg" x1="0" y1="0" x2="0" y2="1"><stop offset="0" stop-color="#e4e4e4"/><stop offset="1" stop-color="#b4b4b4"/></linearGradient></defs><path d="M5.1 0.5 L9.5 4.4 L8.1 7.2 L2.2 7.2 L0.8 4.4 Z" fill="url(#tg)" stroke="#333" stroke-width="1" stroke-linejoin="round"/></svg>
<div class="t" style="left:689.30px;top:388.90px;font-size:9.5px;line-height:12px;transform:scaleX(0.8929);transform-origin:0 0;color:#1e1e1e;">Whites</div>
<div class="a" style="left:838.5px;top:387.7px;width:32.5px;height:12.8px;background:#fff;border:1px solid #787878;border-radius:1px"></div>
<div class="t" style="left:840.60px;top:387.90px;font-size:9.5px;line-height:12px;transform:scaleX(1.0500);transform-origin:0 0;color:#1e1e1e;">0</div>
<div class="a" style="left:687.6px;top:401.8px;width:185px;height:5.6px;border-radius:2.8px;background:rgba(255,255,255,.85)"></div>
<div class="a" style="left:688px;top:402.8px;width:184px;height:3.6px;border-radius:1.8px;background:linear-gradient(90deg,#6a6a6a,#858585 50%,#c8c8c8 85%,#e6e6e6);box-shadow:inset 0 0.8px 0 rgba(0,0,0,.45),inset 0 -0.6px 0 rgba(0,0,0,.25)"></div>
<svg style="left:775px;top:400.6px" width="11" height="9"><defs><linearGradient id="tg" x1="0" y1="0" x2="0" y2="1"><stop offset="0" stop-color="#e4e4e4"/><stop offset="1" stop-color="#b4b4b4"/></linearGradient></defs><path d="M5.1 0.5 L9.5 4.4 L8.1 7.2 L2.2 7.2 L0.8 4.4 Z" fill="url(#tg)" stroke="#333" stroke-width="1" stroke-linejoin="round"/></svg>
<div class="t" style="left:689.30px;top:412.20px;font-size:9.5px;line-height:12px;transform:scaleX(0.8111);transform-origin:0 0;color:#1e1e1e;">Blacks</div>
<div class="a" style="left:838.5px;top:411px;width:32.5px;height:12.8px;background:#fff;border:1px solid #787878;border-radius:1px"></div>
<div class="t" style="left:840.60px;top:411.20px;font-size:9.5px;line-height:12px;transform:scaleX(1.0500);transform-origin:0 0;color:#1e1e1e;">0</div>
<div class="a" style="left:687.6px;top:425.1px;width:185px;height:5.6px;border-radius:2.8px;background:rgba(255,255,255,.85)"></div>
<div class="a" style="left:688px;top:426.1px;width:184px;height:3.6px;border-radius:1.8px;background:linear-gradient(90deg,#000,#222 40%,#555 80%,#6a6a6a);box-shadow:inset 0 0.8px 0 rgba(0,0,0,.45),inset 0 -0.6px 0 rgba(0,0,0,.25)"></div>
<svg style="left:775px;top:423.90000000000003px" width="11" height="9"><defs><linearGradient id="tg" x1="0" y1="0" x2="0" y2="1"><stop offset="0" stop-color="#e4e4e4"/><stop offset="1" stop-color="#b4b4b4"/></linearGradient></defs><path d="M5.1 0.5 L9.5 4.4 L8.1 7.2 L2.2 7.2 L0.8 4.4 Z" fill="url(#tg)" stroke="#333" stroke-width="1" stroke-linejoin="round"/></svg>
<div class="a" style="left:684px;top:440px;width:193px;height:1px;background:#555"></div>
<div class="t" style="left:689.30px;top:448.90px;font-size:9.5px;line-height:12px;transform:scaleX(0.9038);transform-origin:0 0;color:#1e1e1e;">Clarity</div>
<div class="a" style="left:838.5px;top:446.8px;width:32.5px;height:12.8px;background:#fff;border:1px solid #787878;border-radius:1px"></div>
<div class="t" style="left:840.60px;top:447.90px;font-size:9.5px;line-height:12px;transform:scaleX(1.0500);transform-origin:0 0;color:#1e1e1e;">0</div>
<div class="a" style="left:687.6px;top:461.8px;width:185px;height:5.6px;border-radius:2.8px;background:rgba(255,255,255,.85)"></div>
<div class="a" style="left:688px;top:462.8px;width:92.5px;height:3.6px;border-radius:1.8px 0 0 1.8px;background:linear-gradient(90deg,rgb(103,103,103) 0px,rgb(103,103,103) 2px,rgb(100,100,100) 4px,rgb(94,94,94) 6px,rgb(88,88,88) 8px,rgb(83,83,83) 10px,rgb(80,80,80) 12px,rgb(79,79,79) 14px,rgb(82,82,82) 16px,rgb(87,87,87) 18px,rgb(93,93,93) 20px,rgb(99,99,99) 22px,rgb(102,102,102) 24px,rgb(102,102,102) 26px,rgb(97,97,97) 28px,rgb(90,90,90) 30px,rgb(81,81,81) 32px,rgb(73,73,73) 34px,rgb(68,68,68) 36px,rgb(67,67,67) 38px,rgb(71,71,71) 40px,rgb(78,78,78) 42px,rgb(87,87,87) 44px,rgb(96,96,96) 46px,rgb(101,101,101) 48px,rgb(101,101,101) 50px,rgb(96,96,96) 52px,rgb(86,86,86) 54px,rgb(75,75,75) 56px,rgb(64,64,64) 58px,rgb(57,57,57) 60px,rgb(55,55,55) 62px,rgb(59,59,59) 64px,rgb(68,68,68) 66px,rgb(80,80,80) 68px,rgb(91,91,91) 70px,rgb(99,99,99) 72px,rgb(100,100,100) 74px,rgb(94,94,94) 76px,rgb(83,83,83) 78px,rgb(69,69,69) 80px,rgb(55,55,55) 82px,rgb(46,46,46) 84px,rgb(43,43,43) 86px,rgb(47,47,47) 88px,rgb(58,58,58) 90px,rgb(72,72,72) 92px);box-shadow:inset 0 0.8px 0 rgba(0,0,0,.45)"></div>
<div class="a" style="left:780.5px;top:462.8px;width:91.5px;height:3.6px;border-radius:0 1.8px 1.8px 0;background:linear-gradient(90deg,rgb(146,146,146) 0px,rgb(195,195,195) 2px,rgb(224,224,224) 4px,rgb(227,227,227) 6px,rgb(203,203,203) 8px,rgb(157,157,157) 10px,rgb(102,102,102) 12px,rgb(52,52,52) 14px,rgb(21,21,21) 16px,rgb(16,16,16) 18px,rgb(39,39,39) 20px,rgb(83,83,83) 22px,rgb(138,138,138) 24px,rgb(188,188,188) 26px,rgb(222,222,222) 28px,rgb(229,229,229) 30px,rgb(208,208,208) 32px,rgb(165,165,165) 34px,rgb(110,110,110) 36px,rgb(59,59,59) 38px,rgb(24,24,24) 40px,rgb(15,15,15) 42px,rgb(34,34,34) 44px,rgb(76,76,76) 46px,rgb(130,130,130) 48px,rgb(182,182,182) 50px,rgb(218,218,218) 52px,rgb(229,229,229) 54px,rgb(213,213,213) 56px,rgb(172,172,172) 58px,rgb(119,119,119) 60px,rgb(66,66,66) 62px,rgb(28,28,28) 64px,rgb(15,15,15) 66px,rgb(29,29,29) 68px,rgb(68,68,68) 70px,rgb(121,121,121) 72px,rgb(175,175,175) 74px,rgb(214,214,214) 76px,rgb(229,229,229) 78px,rgb(217,217,217) 80px,rgb(179,179,179) 82px,rgb(127,127,127) 84px,rgb(73,73,73) 86px,rgb(32,32,32) 88px,rgb(15,15,15) 90px);box-shadow:inset 0 0.8px 0 rgba(0,0,0,.45)"></div>
<svg style="left:775px;top:460.6px" width="11" height="9"><defs><linearGradient id="tg" x1="0" y1="0" x2="0" y2="1"><stop offset="0" stop-color="#e4e4e4"/><stop offset="1" stop-color="#b4b4b4"/></linearGradient></defs><path d="M5.1 0.5 L9.5 4.4 L8.1 7.2 L2.2 7.2 L0.8 4.4 Z" fill="url(#tg)" stroke="#333" stroke-width="1" stroke-linejoin="round"/></svg>
<div class="t" style="left:689.30px;top:473.80px;font-size:9.5px;line-height:12px;transform:scaleX(0.8556);transform-origin:0 0;color:#1e1e1e;">Vibrance</div>
<div class="a" style="left:838.5px;top:472.1px;width:32.5px;height:12.8px;background:#fff;border:1px solid #787878;border-radius:1px"></div>
<div class="t" style="left:840.60px;top:472.80px;font-size:9.5px;line-height:12px;transform:scaleX(1.0500);transform-origin:0 0;color:#1e1e1e;">0</div>
<div class="a" style="left:687.6px;top:486.7px;width:185px;height:5.6px;border-radius:2.8px;background:rgba(255,255,255,.85)"></div>
<div class="a" style="left:688px;top:487.7px;width:92.5px;height:3.6px;border-radius:1.8px 0 0 1.8px;background:linear-gradient(90deg,#505050 0%,#586458 15%,#585866 40%,#6a586a 58%,#6a6a4a 80%,#3a8a5a 100%);box-shadow:inset 0 0.8px 0 rgba(0,0,0,.45)"></div>
<div class="a" style="left:780.5px;top:487.7px;width:91.5px;height:3.6px;border-radius:0 1.8px 1.8px 0;background:linear-gradient(90deg,#5a5a6a 0%,#6a5a8a 12%,#a04a9a 22%,#b04a3a 33%,#b0a040 44%,#40a040 55%,#30a8a8 67%,#2838c0 78%,#c030c0 89%,#d02828 98%);box-shadow:inset 0 0.8px 0 rgba(0,0,0,.45)"></div>
<svg style="left:775px;top:485.5px" width="11" height="9"><defs><linearGradient id="tg" x1="0" y1="0" x2="0" y2="1"><stop offset="0" stop-color="#e4e4e4"/><stop offset="1" stop-color="#b4b4b4"/></linearGradient></defs><path d="M5.1 0.5 L9.5 4.4 L8.1 7.2 L2.2 7.2 L0.8 4.4 Z" fill="url(#tg)" stroke="#333" stroke-width="1" stroke-linejoin="round"/></svg>
<div class="t" style="left:689.30px;top:498.80px;font-size:9.5px;line-height:12px;transform:scaleX(0.9048);transform-origin:0 0;color:#1e1e1e;">Saturation</div>
<div class="a" style="left:838.5px;top:497.2px;width:32.5px;height:12.8px;background:#fff;border:1px solid #787878;border-radius:1px"></div>
<div class="t" style="left:840.60px;top:497.80px;font-size:9.5px;line-height:12px;transform:scaleX(1.0500);transform-origin:0 0;color:#1e1e1e;">0</div>
<div class="a" style="left:687.6px;top:511.79999999999995px;width:185px;height:5.6px;border-radius:2.8px;background:rgba(255,255,255,.85)"></div>
<div class="a" style="left:688px;top:512.8px;width:92.5px;height:3.6px;border-radius:1.8px 0 0 1.8px;background:linear-gradient(90deg,#505050 0%,#586458 15%,#585866 40%,#6a586a 58%,#6a6a4a 80%,#3a8a5a 100%);box-shadow:inset 0 0.8px 0 rgba(0,0,0,.45)"></div>
<div class="a" style="left:780.5px;top:512.8px;width:91.5px;height:3.6px;border-radius:0 1.8px 1.8px 0;background:linear-gradient(90deg,#5a5a6a 0%,#6a5a8a 12%,#a04a9a 22%,#b04a3a 33%,#b0a040 44%,#40a040 55%,#30a8a8 67%,#2838c0 78%,#c030c0 89%,#d02828 98%);box-shadow:inset 0 0.8px 0 rgba(0,0,0,.45)"></div>
<svg style="left:775px;top:510.59999999999997px" width="11" height="9"><defs><linearGradient id="tg" x1="0" y1="0" x2="0" y2="1"><stop offset="0" stop-color="#e4e4e4"/><stop offset="1" stop-color="#b4b4b4"/></linearGradient></defs><path d="M5.1 0.5 L9.5 4.4 L8.1 7.2 L2.2 7.2 L0.8 4.4 Z" fill="url(#tg)" stroke="#333" stroke-width="1" stroke-linejoin="round"/></svg>
<svg style="left:0;top:0" width="900" height="645"><path d="M854 127 L858.3 125 L864.3 138 L870.8 135.2 L878.8 172.8 L854 143.8 L860 140.2 Z" fill="#000"/></svg>
<div class="a" style="left:12px;top:36px;width:19px;height:16px;background:#c6def6;border:1px solid #a9cdf2"></div>
<svg style="left:0;top:0" width="900" height="645"><circle cx="20.1" cy="43.2" r="4.4" fill="#d8e8f8" stroke="#3a3a3a" stroke-width="1.1"/><path d="M23.4 46.5 L26.9 50" stroke="#111" stroke-width="2.2" stroke-linecap="round"/><path d="M38.6 50.4 L35.9 46.6 L34.1 44.3 Q33.7 43.2 34.9 43.2 L37.2 45.2 L36.9 40.3 Q37 39.1 38 39.2 Q38.8 39.4 38.9 40.3 L39.2 43 L39.5 38.6 Q39.7 37.7 40.5 37.7 Q41.4 37.8 41.4 38.8 L41.5 43 L42.1 39 Q42.4 38.2 43.2 38.3 Q44 38.5 43.9 39.4 L43.5 43.6 L44.8 41.6 Q45.5 40.8 46.3 41.2 Q46.9 41.8 46.6 42.8 L45.3 47.2 Q44.8 50.4 43.7 50.4 Z" fill="#fbfbfb" stroke="#4a4a4a" stroke-width="0.95" stroke-linejoin="round"/><path d="M57.20 49.60 L57.46 47.76 L62.16 42.98 L63.73 44.52 L59.04 49.30 Z" fill="#fff" stroke="#222" stroke-width="0.9" stroke-linejoin="round"/><path d="M61.44 41.99 L64.72 45.21" stroke="#111" stroke-width="1.6"/><path d="M63.92 42.75 L66.70 39.91" stroke="#111" stroke-width="2.8" stroke-linecap="round"/><path d="M76.7 38.9 L77.5 41 L79.6 41.8 L77.5 42.6 L76.7 44.7 L75.9 42.6 L73.8 41.8 L75.9 41 Z" fill="#ddd" stroke="#333" stroke-width="0.9" stroke-linejoin="round"/><path d="M76.40 49.60 L76.69 47.76 L81.45 43.05 L83.00 44.61 L78.24 49.33 Z" fill="#fff" stroke="#222" stroke-width="0.9" stroke-linejoin="round"/><path d="M80.75 42.05 L83.99 45.32" stroke="#111" stroke-width="1.6"/><path d="M83.22 42.84 L86.09 40.00" stroke="#111" stroke-width="2.8" stroke-linecap="round"/><g fill="#444"><circle cx="97.1" cy="39" r="0.8"/><circle cx="97.1" cy="43.2" r="0.8"/><circle cx="95" cy="41.1" r="0.8"/><circle cx="99.2" cy="41.1" r="0.8"/></g><circle cx="103.1" cy="44.9" r="3.3" fill="#fff" stroke="#222" stroke-width="1.1"/><circle cx="103.1" cy="44.9" r="1" fill="#111"/><path d="M106 48.1 H109.2 L107.6 49.9 Z" fill="#111"/><path d="M118.7 38.4 V46.8 H126.9 M115.8 41.3 H124.2 V49.6" stroke="#1a1a1a" stroke-width="1.3" fill="none"/><path d="M124.4 41.2 L127.3 38.3" stroke="#555" stroke-width="0.7"/><path d="M120.5 45 L122.4 43" stroke="#666" stroke-width="0.6"/><path d="M126.6 48.3 H129.8 L128.2 50.1 Z" fill="#111"/><rect x="135.6" y="43.2" width="12.6" height="5.2" rx="0.9" fill="#b0b0b0" stroke="#3a3a3a" stroke-width="0.9"/><rect x="136.5" y="44.1" width="10.8" height="3.3" fill="#e6e6e6"/><path d="M137.6 44.1 V47.4 M146.2 44.1 V47.4" stroke="#777" stroke-width="0.8"/><rect x="140.1" y="44.4" width="3.6" height="2.1" rx="0.9" fill="#fff" stroke="#222" stroke-width="0.8"/><path d="M137.5 41.9 Q141.9 37.6 146.3 41.9" stroke="#555" stroke-width="0.8" stroke-dasharray="0.9 1.1" fill="none"/><path d="M157.4 49.3 Q158.2 46 161.2 45.5 Q163.9 45.4 164.1 46.9 Q163 49.6 157.4 49.3 Z" fill="#2a2a2a"/><path d="M163.6 45.3 L170.3 38.8" stroke="#555" stroke-width="1.5" stroke-linecap="round"/><circle cx="161.3" cy="40.9" r="0.85" fill="#444"/><circle cx="158.3" cy="44.7" r="0.85" fill="#333"/><circle cx="168.2" cy="48" r="0.85" fill="#333"/><path d="M178.9 38.6 V45 M175.7 41.8 H182.1" stroke="#555" stroke-width="1.2"/><path d="M180.3 46 Q185.1 41.5 190.2 46 Q185.1 50.3 180.3 46 Z" fill="#f4f4f4" stroke="#222" stroke-width="1.1"/><circle cx="185.3" cy="45.7" r="1.9" fill="#111"/><path d="M196.2 49.4 Q197.2 46.4 199.8 45.9 Q202.5 45.7 202.9 47.1 Q201.8 49.6 196.2 49.4 Z" fill="#222"/><path d="M202.9 45.2 L208.9 39" stroke="#444" stroke-width="2" stroke-linecap="round"/><defs><radialGradient id="gl"><stop offset="0.6" stop-color="#8a8a8a"/><stop offset="1" stop-color="#f0f0f0" stop-opacity="0"/></radialGradient><linearGradient id="gf" x1="0" y1="0" x2="0" y2="1"><stop offset="0" stop-color="#222"/><stop offset="1" stop-color="#fafafa"/></linearGradient></defs><circle cx="222.2" cy="44.2" r="7" fill="url(#gl)"/><path d="M218.6 40 Q218.6 39.3 219.3 39.3 H225.3 Q226 39.3 226 40 L225.7 48.3 Q225.6 49 224.9 49 H219.7 Q219 49 218.9 48.3 Z" fill="url(#gf)" stroke="#2a2a2a" stroke-width="0.9"/><path d="M238.2 40.6 H239.8 M238.2 43.7 H239.8 M238.2 46.6 H239.8" stroke="#222" stroke-width="1.4"/><path d="M241.3 40.6 H250.3 M241.3 43.7 H250.3 M241.3 46.6 H250.3" stroke="#333" stroke-width="1.1"/><path d="M264.4 40 A4.7 4.7 0 0 1 270.5 45.4" stroke="#222" stroke-width="1.4" fill="none"/><path d="M270.4 46.3 A4.7 4.7 0 1 1 261.1 44.2" stroke="#222" stroke-width="1.2" stroke-dasharray="1 1.2" fill="none"/><path d="M261 42.3 L264.6 38.3 L265.8 41.9 Z" fill="#000"/><path d="M286.8 40 A4.7 4.7 0 0 0 280.7 45.4" stroke="#222" stroke-width="1.4" fill="none"/><path d="M280.8 46.3 A4.7 4.7 0 1 0 290.1 44.2" stroke="#222" stroke-width="1.2" stroke-dasharray="1 1.2" fill="none"/><path d="M290.2 42.3 L286.6 38.3 L285.4 41.9 Z" fill="#000"/><rect x="594.5" y="38.5" width="10" height="10" rx="1" fill="#f8f8f8" stroke="#888" stroke-width="1"/><path d="M596.3 43 L598.6 46.2 L603.6 39" stroke="#111" stroke-width="1.3" fill="none"/><rect x="645.5" y="38.5" width="10" height="11" fill="#e6e6e6" stroke="#444" stroke-width="1"/><rect x="646" y="39" width="9" height="2" fill="#888"/><path d="M650 44.5 H659" stroke="#111" stroke-width="1.3"/><path d="M648.6 44.5 L651.6 42.1 V46.9 Z M660.4 44.5 L657.4 42.1 V46.9 Z" fill="#111"/></svg>
<div class="t" style="left:607.70px;top:38.40px;font-size:9.5px;line-height:12px;transform:scaleX(0.8727);transform-origin:0 0;color:#1e1e1e;">Preview</div>
<div class="a" style="left:13px;top:586px;width:28px;height:14px;background:#c6c6c6;border-radius:3px"></div>
<div class="a" style="left:16.5px;top:589px;width:8.5px;height:8.5px;background:linear-gradient(#d4d4d4,#bcbcbc);border:1.2px solid #3e3e3e;border-radius:2px"></div>
<div class="a" style="left:18.7px;top:592.6px;width:4px;height:1.2px;background:#222"></div>
<div class="a" style="left:29.3px;top:589px;width:8.5px;height:8.5px;background:linear-gradient(#d4d4d4,#bcbcbc);border:1.2px solid #3e3e3e;border-radius:2px"></div>
<div class="a" style="left:31.6px;top:592.6px;width:4px;height:1.2px;background:#222"></div><div class="a" style="left:33px;top:591.2px;width:1.2px;height:4px;background:#222"></div>
<div class="a" style="left:42px;top:587px;width:42px;height:12px;background:#fff"></div>
<div class="t" style="left:50.00px;top:587.00px;font-size:8.5px;line-height:12px;transform:scaleX(0.8571);transform-origin:0 0;color:#222;">169.5%</div>
<div class="a" style="left:84px;top:587px;width:12px;height:12px;background:#e2e2e2"></div>
<svg style="left:86px;top:591.5px" width="8" height="5"><path d="M1 0.8 L4 3.8 L7 0.8" stroke="#555" stroke-width="0.9" fill="none"/></svg>
<div class="t" style="left:303.70px;top:587.30px;font-size:9.5px;line-height:12px;transform:scaleX(0.9186);transform-origin:0 0;color:#1e1e1e;">sharpen test 1.tif</div>
<div class="a" style="left:16px;top:615px;width:77px;height:16px;background:#e1e1e1;border:1px solid #adadad"></div>
<div class="t" style="left:30.30px;top:616.70px;font-size:9.5px;line-height:12px;transform:scaleX(0.9580);transform-origin:0 0;color:#1e1e1e;">Save Image</div>
<div class="t" style="left:321.70px;top:617.70px;font-size:9.5px;line-height:12px;transform:scaleX(0.8689);transform-origin:0 0;color:#2424b8;text-decoration:underline">Adobe RGB (1998); 8 bit; 400 by 400 (0.2MP); 300 ppi</div>
<div class="a" style="left:667px;top:615px;width:73px;height:16px;background:#e1e1e1;border:2px solid #1a78d4"></div>
<div class="t" style="left:680.80px;top:616.70px;font-size:9.5px;line-height:12px;transform:scaleX(0.9766);transform-origin:0 0;color:#1e1e1e;">Open Copy</div>
<div class="a" style="left:752px;top:615px;width:60px;height:16px;background:#e1e1e1;border:1px solid #adadad"></div>
<div class="t" style="left:769.90px;top:616.70px;font-size:9.5px;line-height:12px;transform:scaleX(0.9750);transform-origin:0 0;color:#1e1e1e;">Reset</div>
<div class="a" style="left:824px;top:615px;width:60px;height:16px;background:#e1e1e1;border:1px solid #adadad"></div>
<div class="t" style="left:842.70px;top:616.70px;font-size:9.5px;line-height:12px;transform:scaleX(0.9682);transform-origin:0 0;color:#1e1e1e;">Done</div>
<div class="a" style="left:896px;top:637px;width:1.5px;height:1.5px;background:#a0a0a0"></div>
<div class="a" style="left:894px;top:639px;width:1.5px;height:1.5px;background:#a0a0a0"></div>
<div class="a" style="left:896px;top:639px;width:1.5px;height:1.5px;background:#a0a0a0"></div>
<div class="a" style="left:892px;top:641px;width:1.5px;height:1.5px;background:#a0a0a0"></div>
<div class="a" style="left:894px;top:641px;width:1.5px;height:1.5px;background:#a0a0a0"></div>
<div class="a" style="left:896px;top:641px;width:1.5px;height:1.5px;background:#a0a0a0"></div>
</body></html>
